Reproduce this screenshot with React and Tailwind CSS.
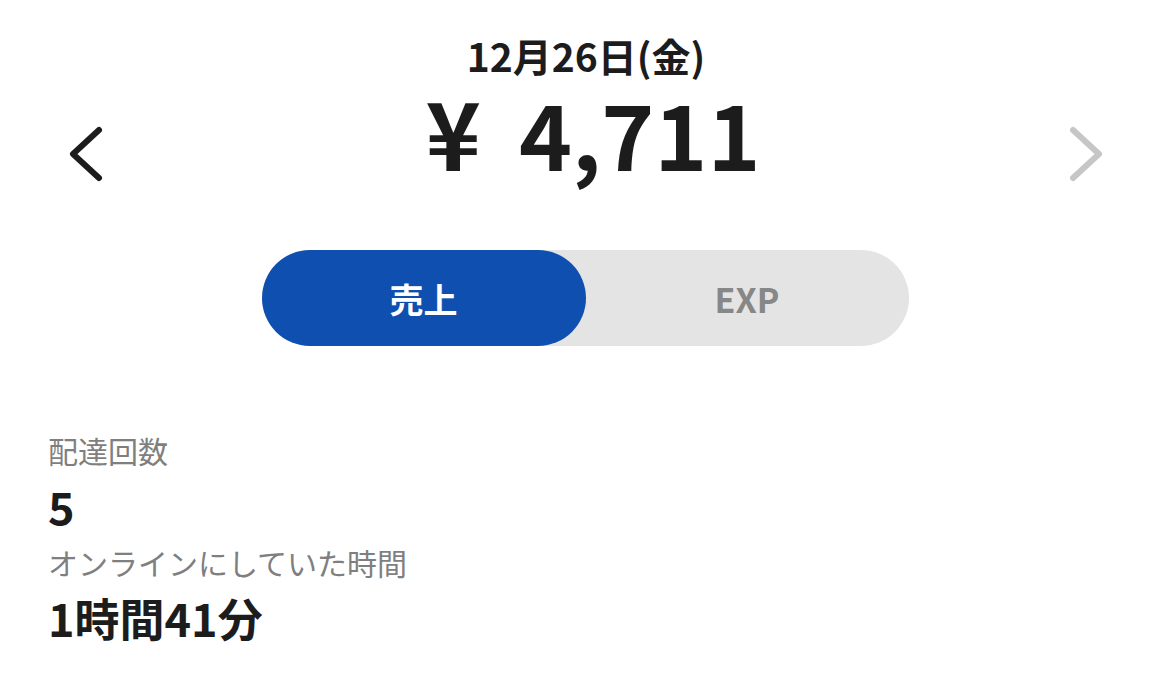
import React from "react";

const font = { fontFamily: '"Noto Sans CJK JP", "Noto Sans", sans-serif' };

function Chevron({ dir, color }) {
  return (
    <svg width="40" height="60" viewBox="0 0 40 60" fill="none">
      {dir === "left" ? (
        <path d="M33 5 L7 29 L33 53" stroke={color} strokeWidth="6" strokeLinecap="round" strokeLinejoin="round" />
      ) : (
        <path d="M7 5 L33 29 L7 53" stroke={color} strokeWidth="6" strokeLinecap="round" strokeLinejoin="round" />
      )}
    </svg>
  );
}

export default function App() {
  return (
    <div className="w-[1170px] h-[689px] bg-white text-[#1c1c1c] overflow-hidden" style={font}>
      <div className="flex items-start justify-between pl-[66px] pr-[64px] pt-[28px]">
        <div className="pt-[97px]"><Chevron dir="left" color="#1c1c1c" /></div>
        <div className="flex flex-col items-center">
          <div className="text-[39px] font-bold leading-[54px]">12月26日(金)</div>
          <div className="text-[90px] font-bold leading-[96px] flex items-baseline pl-[14px]">
            <span className="text-[94px]">¥</span>
            <span className="ml-[38px]">4,711</span>
          </div>
        </div>
        <div className="pt-[97px]"><Chevron dir="right" color="#c6c6c6" /></div>
      </div>
      <div className="flex justify-center mt-[65px]">
        <div className="flex w-[647px] h-[96px] rounded-full bg-[#e4e4e4]">
          <div className="w-[324px] h-full rounded-full bg-[#0f4faf] flex items-center justify-center text-white text-[34px] font-bold">売上</div>
          <div className="flex-1 flex items-center justify-center text-[#878787] text-[34px] font-bold">EXP</div>
        </div>
      </div>
      <div className="pl-[48px] mt-[78px]">
        <div className="text-[30px] text-[#7f7f7f] leading-[52px]">配達回数</div>
        <div className="text-[45px] font-bold leading-[60px]">5</div>
        <div className="text-[30px] text-[#7f7f7f] leading-[52px]">オンラインにしていた時間</div>
        <div className="text-[45px] font-bold leading-[60px]">1時間41分</div>
      </div>
    </div>
  );
}
